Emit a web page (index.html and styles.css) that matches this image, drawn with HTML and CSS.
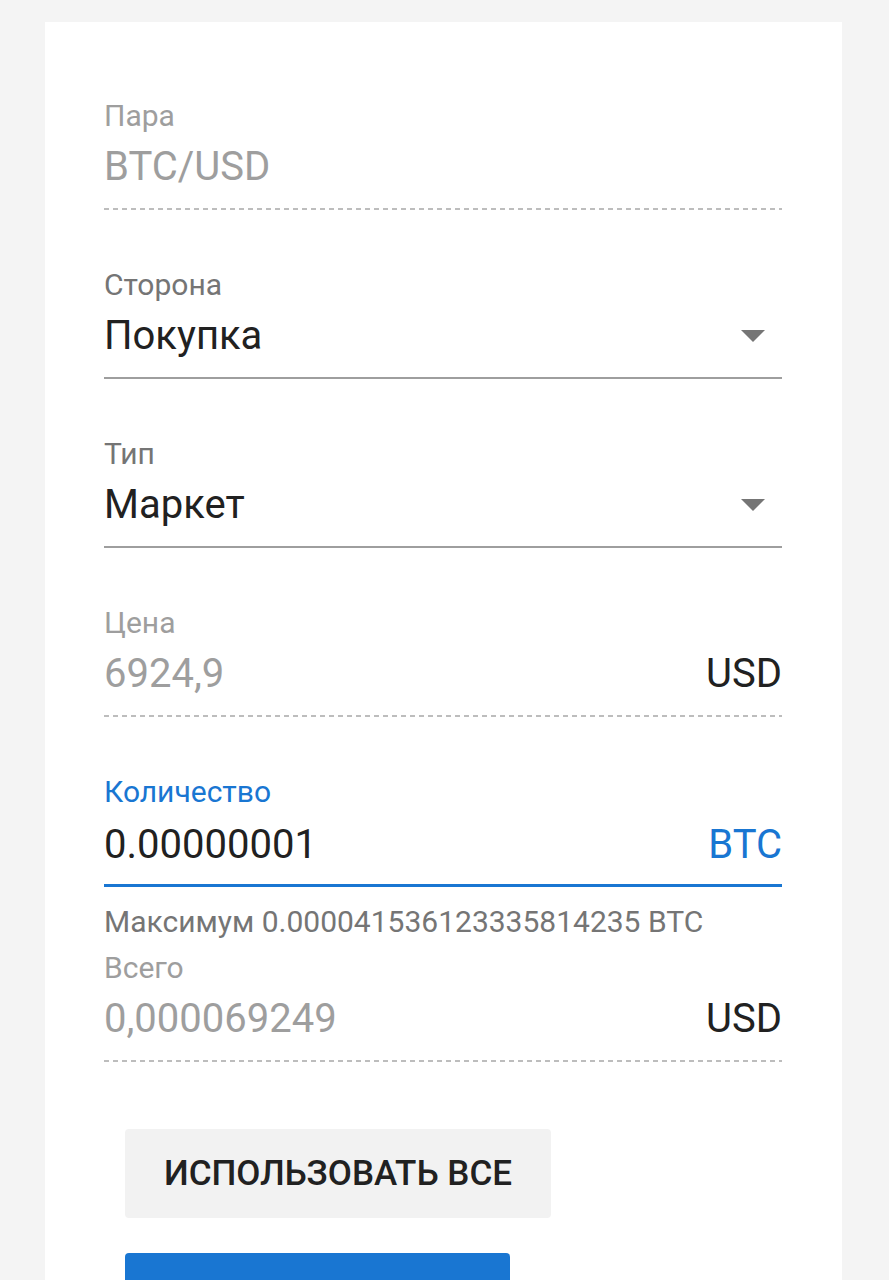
FILE: index.html
```html
<!DOCTYPE html>
<html lang="ru">
<head>
  <meta charset="UTF-8">
  <meta name="viewport" content="width=device-width, initial-scale=1.0">
  <title>Новый ордер</title>
  <link rel="stylesheet" href="styles.css">
</head>
<body>
  <div class="card">
    <!-- Pair -->
    <div class="field field-disabled">
      <div class="field-label">Пара</div>
      <div class="field-row">
        <span class="field-value">BTC/USD</span>
      </div>
    </div>

    <!-- Side -->
    <div class="field field-select">
      <div class="field-label">Сторона</div>
      <div class="field-row">
        <span class="field-value">Покупка</span>
        <span class="arrow"></span>
      </div>
    </div>

    <!-- Type -->
    <div class="field field-select">
      <div class="field-label">Тип</div>
      <div class="field-row">
        <span class="field-value">Маркет</span>
        <span class="arrow"></span>
      </div>
    </div>

    <!-- Price -->
    <div class="field field-disabled">
      <div class="field-label">Цена</div>
      <div class="field-row">
        <span class="field-value">6924,9</span>
        <span class="field-suffix">USD</span>
      </div>
    </div>

    <!-- Amount -->
    <div class="field field-focused field-helped">
      <div class="field-label">Количество</div>
      <div class="field-row">
        <span class="field-value">0.00000001</span>
        <span class="field-suffix">BTC</span>
      </div>
    </div>
    <div class="helper">Максимум 0.000041536123335814235 BTC</div>

    <!-- Total -->
    <div class="field field-disabled field-total">
      <div class="field-label">Всего</div>
      <div class="field-row">
        <span class="field-value">0,000069249</span>
        <span class="field-suffix">USD</span>
      </div>
    </div>

    <div class="actions">
      <button class="btn btn-flat">Использовать все</button>
      <button class="btn btn-primary" aria-label="Купить"></button>
    </div>
  </div>
</body>
</html>
```

FILE: styles.css
```css
body {
  margin: 0;
  background: #f4f4f4;
  font-family: Roboto, "Noto Sans", sans-serif;
  color: #212121;
}

.card {
  width: 797px;
  margin: 22px 0 0 45px;
  box-sizing: border-box;
  padding: 76px 60px 40px 59px;
  background: #fff;
  min-height: 1300px;
}

.field {
  margin-bottom: 57px;
}

.field-label {
  font-size: 30px;
  line-height: 36px;
  color: #757575;
}

.field-row {
  display: flex;
  align-items: center;
  justify-content: space-between;
  margin-top: 9px;
  padding-bottom: 17px;
  border-bottom: 2px solid #9e9e9e;
}

.field-value {
  font-size: 40px;
  line-height: 48px;
}

.field-suffix {
  font-size: 40px;
  line-height: 48px;
  color: #212121;
}

/* disabled fields: grey text and dashed underline */
.field-disabled .field-label,
.field-disabled .field-value {
  color: #9e9e9e;
}

.field-disabled .field-row {
  border-bottom: none;
  padding-bottom: 19px;
  background-image: repeating-linear-gradient(to right, #bdbdbd 0 5px, transparent 5px 9px);
  background-size: 100% 2px;
  background-position: left bottom;
  background-repeat: no-repeat;
}

.arrow {
  width: 0;
  height: 0;
  margin-right: 17px;
  border-left: 12px solid transparent;
  border-right: 12px solid transparent;
  border-top: 12px solid #757575;
}

.field-focused .field-label,
.field-focused .field-suffix {
  color: #1976d2;
}

.field-focused .field-row {
  margin-top: 11px;
  padding-bottom: 15px;
  border-bottom: 3px solid #1976d2;
}

.field-helped {
  margin-bottom: 17px;
}

.helper {
  font-size: 30px;
  line-height: 36px;
  color: #757575;
  margin-bottom: 10px;
}

.field-total {
  margin-bottom: 0;
}

.actions {
  display: flex;
  flex-direction: column;
  align-items: flex-start;
  gap: 35px;
  padding-left: 21px;
  margin-top: 67px;
}

.btn {
  border: none;
  border-radius: 4px;
  font-family: Roboto, "Noto Sans", sans-serif;
  font-size: 35px;
  font-weight: 500;
  text-transform: uppercase;
  height: 89px;
  padding: 0;
}

.btn-flat {
  background: #f2f2f2;
  color: #212121;
  width: 426px;
}

.btn-primary {
  background: #1976d2;
  color: #fff;
  width: 385px;
}
```
